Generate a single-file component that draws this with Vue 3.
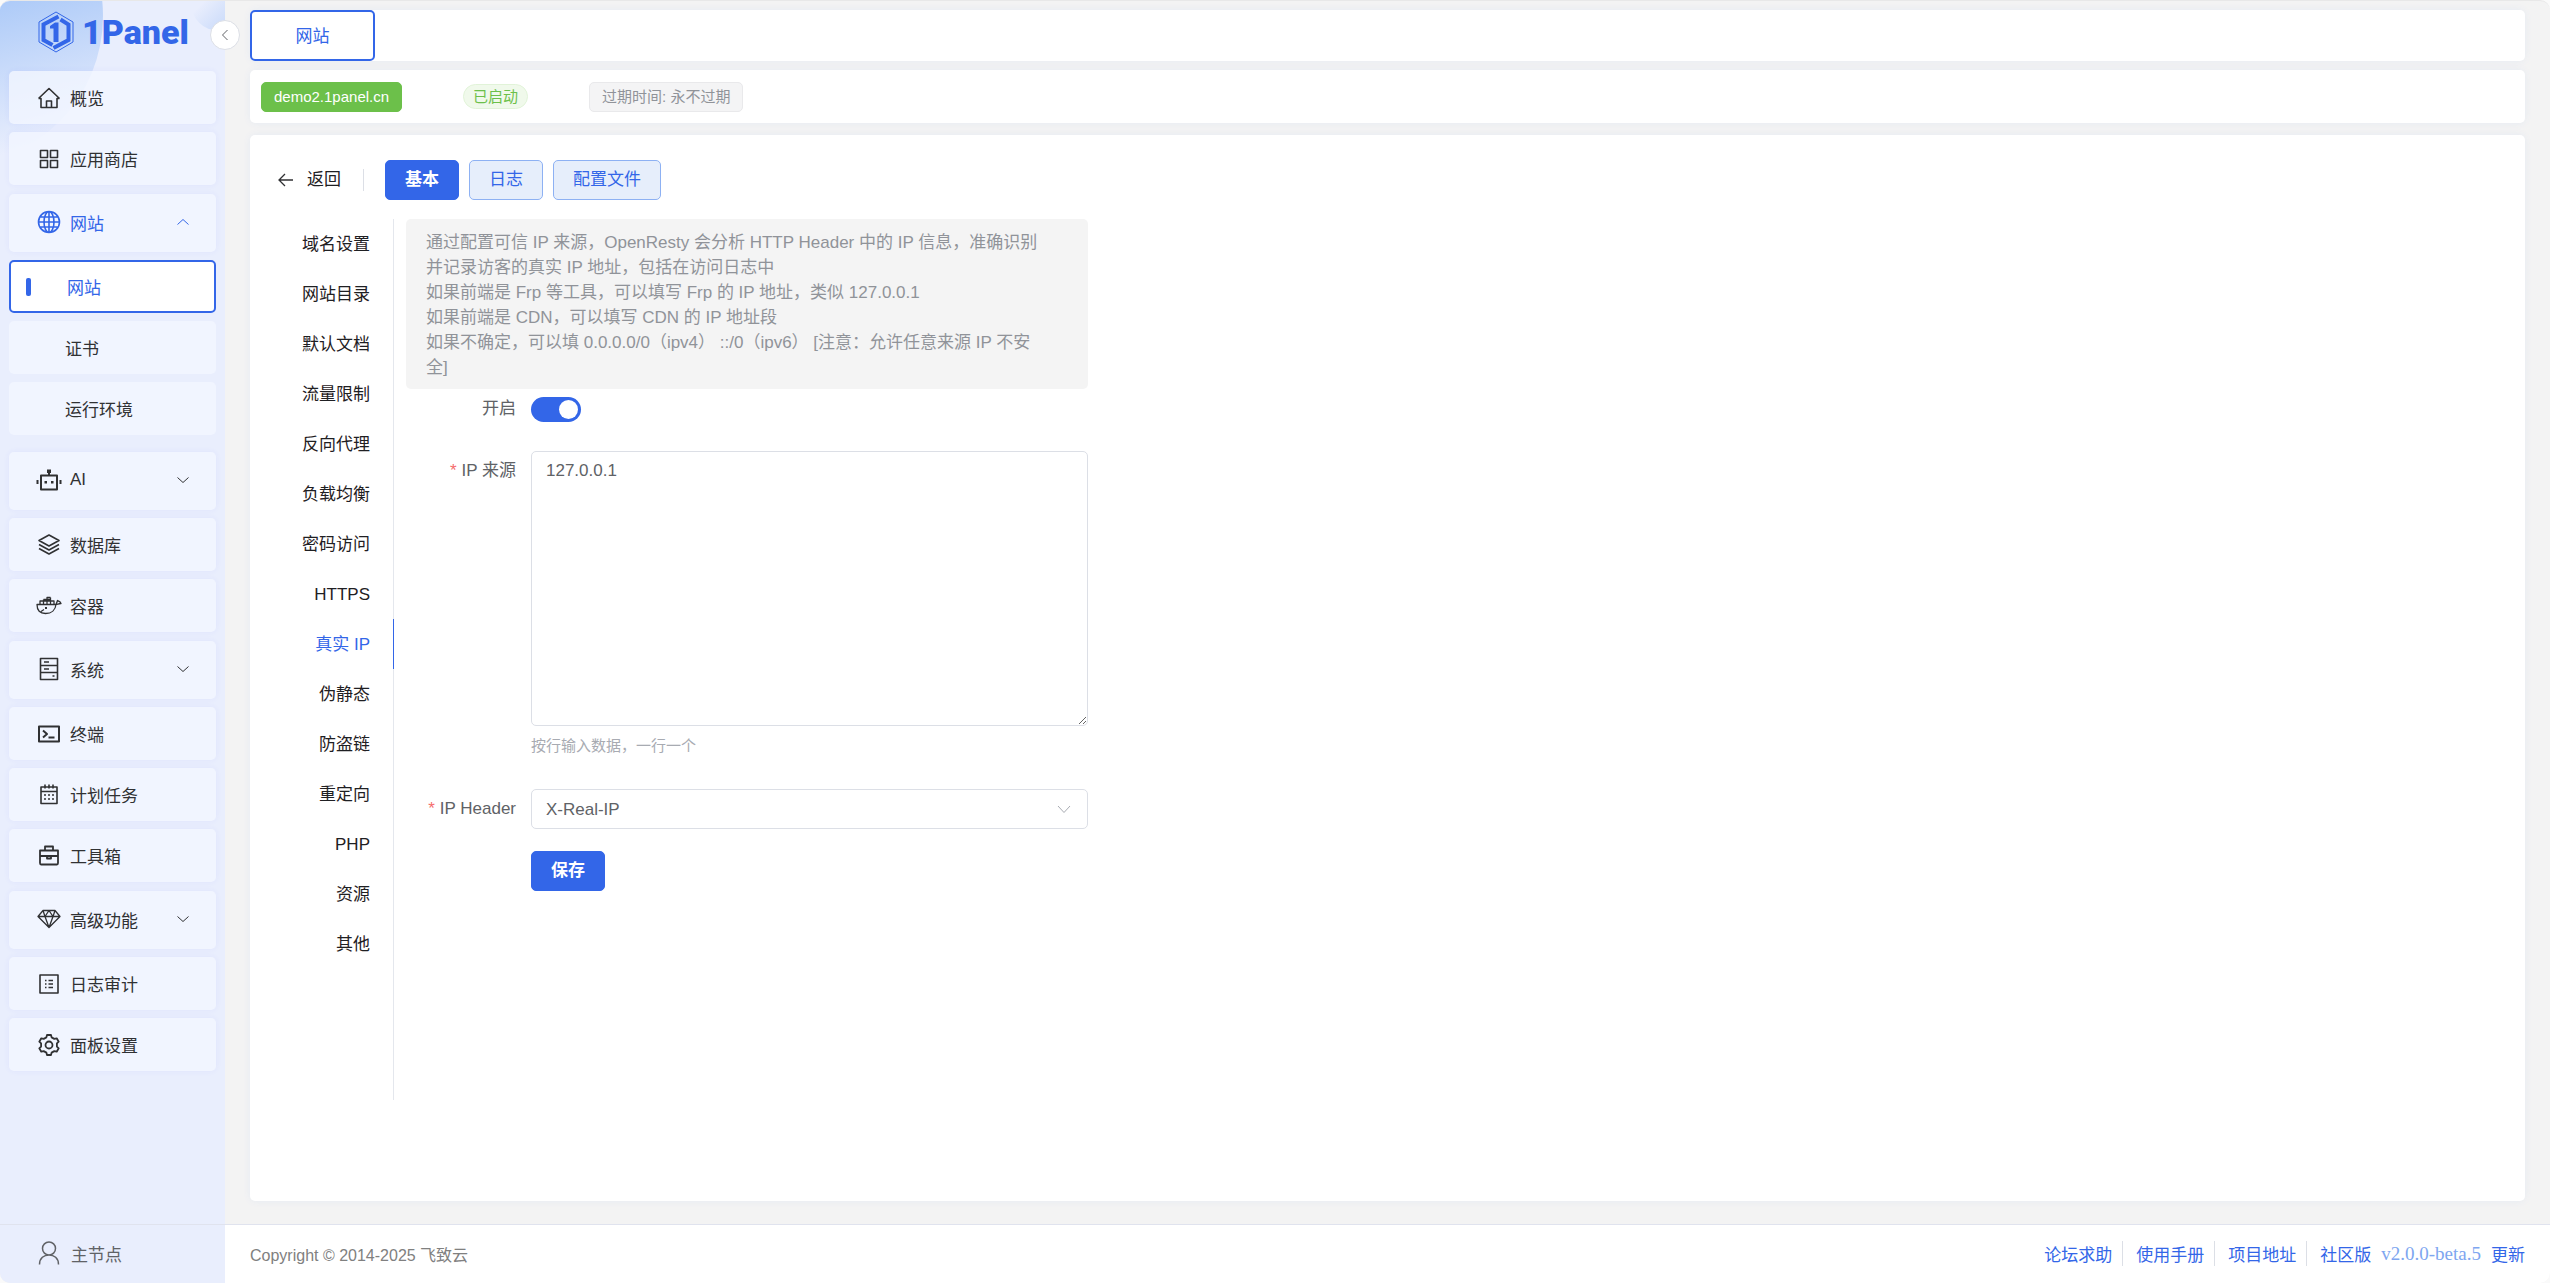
<script setup>
import { ref } from 'vue'

const icons = {
  home: { stroke: 'M2.5 12.5L13 2.5L23.5 12.5M2.5 12.5H5V21.5H21V12.5H23.5M10.5 21V15H15.5V21' },
  grid: { stroke: 'M4.5 3.5H11.5V10.5H4.5ZM14.5 3.5H21.5V10.5H14.5ZM4.5 13.5H11.5V20.5H4.5ZM14.5 13.5H21.5V20.5H14.5Z' },
  globe: {
    stroke:
      'M2.5 12A10.5 10.5 0 1 0 23.5 12A10.5 10.5 0 1 0 2.5 12ZM8 12A5 10.5 0 1 0 18 12A5 10.5 0 1 0 8 12ZM13 1.5V22.5M2.5 12H23.5M4 7H22M4 17H22'
  },
  robot: {
    stroke: 'M5 7.5H21V21.5H5ZM13 4V7.5',
    fill: 'M11 1.5H15V5H11ZM8.5 13H11V15.5H8.5ZM15 13H17.5V15.5H15ZM0.5 12H2.5V16H0.5ZM23.5 12H25.5V16H23.5Z',
    width: 2
  },
  layers: { stroke: 'M13 2L23 7.5L13 13L3 7.5ZM3 11.5L13 17L23 11.5M3 15.5L13 21L23 15.5' },
  docker: {
    stroke:
      'M1 10.5H20C21.5 10.5 22.5 9.5 25 9.5C24 7 22.5 7.5 21.5 6.5C21 8 20.5 9.5 20 10.5C19.5 16 15.5 19.5 9.5 19.5C4 19.5 1 16.5 1 10.5ZM4 10.5V7H18V10.5M7.5 10.5V5.5M11 10.5V5.5M14.5 10.5V3.5M11 5.5V3.5H14.5M7.5 5.5H14.5M5 17.5L8 15.5',
    fill: 'M9 13H11V15H9Z',
    width: 1.3
  },
  server: { stroke: 'M4.5 1.5H21.5V22.5H4.5ZM4.5 8.5H21.5M4.5 15.5H21.5M8 5H13M8 12H13M16.5 19H18.5' },
  terminal: { stroke: 'M3 4.5H23V19.5H3ZM7 8.5L11 12L7 15.5M12.5 15.5H18.5', width: 2 },
  calendar: {
    stroke: 'M5 4H21V20.5H5ZM5 8.5H21M9 1.5V5.5M13 1.5V5.5M17 1.5V5.5M8 12H10M12 12H14M16 12H18M8 16H10M12 16H14M16 16H18'
  },
  toolbox: { stroke: 'M4 6.5H22V19C22 20 21.5 20.5 21 20.5H5C4.500 20.5 4 20 4 19ZM9 6.5V2.5H17V6.5M4 12H22M11 12V14.5H15V12', width: 1.8 },
  diamond: { stroke: 'M7 3.5H19L24 9.5L13 20.5L2 9.5ZM2 9.5H24M9 9.5L13 20.5L17 9.5M9 9.5L13 3.5L17 9.5M7 3.5L9 9.5M19 3.5L17 9.5', width: 1.3 },
  list: { stroke: 'M4 3H22V21H4ZM12.5 8.5H17M12.5 12H17M12.5 15.5H17M9 8.5H10.5M9 12H10.5M9 15.5H10.5' },
  gear: {
    stroke:
      'M10.4 4.4L11 2H15L15.6 4.4L18.3 5.9L20.7 5.3L22.7 8.7L20.9 10.4V13.6L22.7 15.3L20.7 18.7L18.3 18.1L15.6 19.6L15 22H11L10.4 19.6L7.7 18.1L5.3 18.7L3.3 15.3L5.1 13.6V10.4L3.3 8.7L5.3 5.3L7.7 5.9ZM9.500 12A3.5 3.5 0 1 0 16.5 12A3.5 3.5 0 1 0 9.5 12Z',
    width: 1.8
  }
}

const menu = [
  { label: '概览', icon: 'home' },
  { label: '应用商店', icon: 'grid' },
  {
    label: '网站',
    icon: 'globe',
    group: true,
    open: true,
    children: [{ label: '网站', current: true }, { label: '证书' }, { label: '运行环境' }]
  },
  { label: 'AI', icon: 'robot', group: true },
  { label: '数据库', icon: 'layers' },
  { label: '容器', icon: 'docker' },
  { label: '系统', icon: 'server', group: true },
  { label: '终端', icon: 'terminal' },
  { label: '计划任务', icon: 'calendar' },
  { label: '工具箱', icon: 'toolbox' },
  { label: '高级功能', icon: 'diamond', group: true },
  { label: '日志审计', icon: 'list' },
  { label: '面板设置', icon: 'gear' }
]

const sections = [
  '域名设置', '网站目录', '默认文档', '流量限制', '反向代理', '负载均衡', '密码访问', 'HTTPS',
  '真实 IP', '伪静态', '防盗链', '重定向', 'PHP', '资源', '其他'
]
const activeSection = ref('真实 IP')

const notes = [
  '通过配置可信 IP 来源，OpenResty 会分析 HTTP Header 中的 IP 信息，准确识别并记录访客的真实 IP 地址，包括在访问日志中',
  '如果前端是 Frp 等工具，可以填写 Frp 的 IP 地址，类似 127.0.0.1',
  '如果前端是 CDN，可以填写 CDN 的 IP 地址段',
  '如果不确定，可以填 0.0.0.0/0（ipv4） ::/0（ipv6） [注意：允许任意来源 IP 不安全]'
]

const enabled = ref(true)
const ipFrom = ref('127.0.0.1')
const ipHeader = ref('X-Real-IP')
</script>

<template>
  <div class="shell">
    <aside class="sidebar">
      <div class="decor" aria-hidden="true"></div>
      <a class="brand" href="#">
        <svg width="36" height="42" viewBox="0 0 36 42" aria-hidden="true">
          <path d="M18 1L35 11V31L18 41L1 31V11Z" fill="none" stroke="#3366e8" stroke-width="1" />
          <path
            d="M20.500 5.500L5.500 13.500V29L14.500 34M22.500 8.500L30.500 13.500V29L15.500 37"
            fill="none"
            stroke="#3366e8"
            stroke-width="4"
          />
          <path d="M12 15L17 11.500H20.500V31H15.500V17.500H12Z" fill="#3366e8" />
        </svg>
        <span>1Panel</span>
      </a>
      <button class="collapse" type="button" aria-label="收起">
        <svg width="14" height="14" viewBox="0 0 14 14"><path d="M9.500 2L4.500 7L9.500 12" /></svg>
      </button>

      <nav class="menu">
        <template v-for="item in menu" :key="item.label">
          <a class="item" :class="{ group: item.group, open: item.open }" href="#">
            <svg class="icon" width="26" height="24" viewBox="0 0 26 24" aria-hidden="true">
              <path :d="icons[item.icon].stroke" fill="none" stroke="currentColor" stroke-linejoin="round" :stroke-width="icons[item.icon].width || 1.6" />
              <path v-if="icons[item.icon].fill" :d="icons[item.icon].fill" fill="currentColor" />
            </svg>
            <span>{{ item.label }}</span>
            <svg v-if="item.group" class="chevron" width="14" height="14" viewBox="0 0 14 14" aria-hidden="true">
              <path :d="item.open ? 'M1.500 9.500L7 4.500L12.500 9.500' : 'M1.500 4.500L7 9.500L12.500 4.500'" />
            </svg>
          </a>
          <div v-if="item.children" class="submenu">
            <a v-for="child in item.children" :key="child.label" class="subitem" :class="{ current: child.current }" href="#">
              {{ child.label }}
            </a>
          </div>
        </template>
      </nav>

      <a class="node" href="#">
        <svg width="22" height="24" viewBox="0 0 22 24" aria-hidden="true">
          <path d="M4.500 7.500A6.500 6.500 0 1 0 17.500 7.500A6.500 6.500 0 1 0 4.500 7.500ZM1.500 23.500C1.500 17 6 14 11 14S20.500 17 20.500 23.500" />
        </svg>
        <span>主节点</span>
      </a>
    </aside>

    <div class="page">
      <main class="content">
        <nav class="tabs card"><a class="tab" href="#">网站</a></nav>

        <div class="status card">
          <span class="tag domain">demo2.1panel.cn</span>
          <span class="pill">已启动</span>
          <span class="tag expire">过期时间: 永不过期</span>
        </div>

        <section class="detail card">
          <header class="bar">
            <button class="back" type="button">
              <svg width="18" height="18" viewBox="0 0 18 18" aria-hidden="true"><path d="M16 9H2M8 3L2 9L8 15" /></svg>
              <span>返回</span>
            </button>
            <button class="btn primary" type="button">基本</button>
            <button class="btn" type="button">日志</button>
            <button class="btn" type="button">配置文件</button>
          </header>

          <div class="body">
            <nav class="sections">
              <a
                v-for="name in sections"
                :key="name"
                href="#"
                :class="{ active: name === activeSection }"
                @click.prevent="activeSection = name"
              >{{ name }}</a>
            </nav>

            <form class="form" @submit.prevent>
              <div class="alert">
                <p v-for="note in notes" :key="note">{{ note }}</p>
              </div>

              <div class="field">
                <label for="enable">开启</label>
                <div class="control switch-row"><input id="enable" v-model="enabled" class="switch" type="checkbox" role="switch" /></div>
              </div>

              <div class="field">
                <label class="required" for="ip-from">IP 来源</label>
                <div class="control">
                  <textarea id="ip-from" v-model="ipFrom" spellcheck="false"></textarea>
                  <p class="hint">按行输入数据，一行一个</p>
                </div>
              </div>

              <div class="field">
                <label class="required" for="ip-header">IP Header</label>
                <div class="control select">
                  <select id="ip-header" v-model="ipHeader">
                    <option>X-Real-IP</option>
                    <option>X-Forwarded-For</option>
                    <option>CF-Connecting-IP</option>
                  </select>
                  <svg width="14" height="14" viewBox="0 0 14 14" aria-hidden="true"><path d="M1 4L7 10.500L13 4" /></svg>
                </div>
              </div>

              <button class="btn primary save" type="submit">保存</button>
            </form>
          </div>
        </section>
      </main>

      <footer class="footer">
        <span>Copyright © 2014-2025 飞致云</span>
        <div class="links">
          <a href="#">论坛求助</a>
          <a href="#">使用手册</a>
          <a href="#">项目地址</a>
          <a href="#">社区版</a>
          <span class="version">v2.0.0-beta.5</span>
          <a href="#">更新</a>
        </div>
      </footer>
    </div>
  </div>
</template>

<style>
body {
  background: #fafafa;
}
</style>

<style scoped>
.shell,
.shell * {
  box-sizing: border-box;
}

.shell {
  display: flex;
  min-height: 100vh;
  border-top: 1px solid #e8e8e8;
  border-radius: 10px;
  overflow: hidden;
  background: #f3f3f3;
  color: #303133;
  font-family: "Liberation Sans", "Noto Sans CJK SC", sans-serif;
  font-size: 17px;
}

a {
  color: inherit;
  text-decoration: none;
}

p {
  margin: 0;
}

button,
select,
textarea {
  font: inherit;
}

/* Sidebar */
.sidebar {
  position: relative;
  display: flex;
  flex: none;
  flex-direction: column;
  width: 225px;
  background: #e9eefd;
}

.decor {
  position: absolute;
  inset: 0;
  overflow: hidden;
}

.decor::before,
.decor::after {
  position: absolute;
  border-radius: 50%;
  content: "";
}

.decor::before {
  top: -135px;
  left: -197px;
  width: 300px;
  height: 300px;
  background: linear-gradient(165deg, #aecbf8 50%, rgba(233, 238, 253, 0) 90%);
}

.decor::after {
  top: -26px;
  left: 191px;
  width: 56px;
  height: 56px;
  background: linear-gradient(135deg, #e9eefd 35%, #b9d0f8);
}

.brand {
  position: relative;
  display: flex;
  align-items: center;
  gap: 8px;
  height: 62px;
  margin-bottom: 8px;
  padding: 0 0 0 38px;
  color: #3366e8;
  font-family: Roboto, "Liberation Sans", sans-serif;
  font-size: 34px;
  font-weight: 900;
}

.collapse {
  position: absolute;
  top: 19px;
  right: -15px;
  z-index: 1;
  display: flex;
  align-items: center;
  justify-content: center;
  width: 30px;
  height: 30px;
  padding: 0;
  border: 1px solid #dcdfe6;
  border-radius: 50%;
  background: #fff;
}

.collapse path,
.chevron path,
.node path,
.back path,
.select path {
  fill: none;
  stroke: #606266;
  stroke-width: 1;
}

.menu {
  position: relative;
  display: flex;
  flex: 1;
  flex-direction: column;
  gap: 8px;
  padding: 0 9px;
}

.item,
.subitem {
  display: flex;
  align-items: center;
  height: 53px;
  border-radius: 5px;
  background: rgba(242, 246, 255, 0.8);
}

.item {
  gap: 8px;
  padding: 0 26px 0 27px;
  box-shadow: 0 0 6px rgba(60, 60, 255, 0.06);
}

.item.group {
  height: 58px;
  margin-top: 1px;
  padding-bottom: 2px;
}

.item.open {
  color: #3366e8;
}

.chevron path {
  stroke: #303133;
}

.item.open .chevron path {
  stroke: #3366e8;
}

.chevron {
  margin-left: auto;
}

.submenu {
  display: flex;
  flex-direction: column;
  gap: 8px;
  margin-bottom: 8px;
}

.subitem {
  padding-left: 56px;
}

.subitem.current {
  gap: 36px;
  padding-left: 15px;
  border: 2px solid #3366e8;
  background: #fff;
  color: #3366e8;
}

.subitem.current::before {
  width: 5px;
  height: 18px;
  border-radius: 2px;
  background: #3366e8;
  content: "";
}

.node {
  position: relative;
  display: flex;
  align-items: center;
  gap: 11px;
  height: 59px;
  padding: 0 0 2px 38px;
  border-top: 1px solid #e0e3ee;
  color: #606266;
}

.node path {
  stroke-width: 1.5;
}

/* Page */
.page {
  display: flex;
  flex: 1;
  flex-direction: column;
  min-width: 0;
}

.content {
  display: flex;
  flex: 1;
  flex-direction: column;
  padding: 9px 25px 23px;
}

.card {
  border-radius: 5px;
  background: #fff;
  box-shadow: 0 0 8px rgba(0, 94, 235, 0.06);
}

.tabs {
  display: flex;
  margin-bottom: 9px;
}

.tab {
  display: flex;
  align-items: center;
  justify-content: center;
  width: 125px;
  height: 51px;
  padding-bottom: 2px;
  border: 2px solid #3366e8;
  border-radius: 5px;
  color: #3366e8;
}

.status {
  display: flex;
  align-items: center;
  gap: 61px;
  height: 53px;
  margin-bottom: 12px;
  padding: 0 11px;
  font-size: 15px;
}

.tag {
  height: 30px;
  padding: 0 12px;
  border: 1px solid;
  border-radius: 5px;
  line-height: 28px;
}

.domain {
  border-color: #6cc04a;
  background: #6cc04a;
  color: #fff;
}

.pill {
  height: 25px;
  padding: 0 9px;
  border: 1px solid #e1f3d8;
  border-radius: 13px;
  background: #f0f9eb;
  color: #6cc04a;
  line-height: 23px;
}

.expire {
  border-color: #e9e9eb;
  background: #f4f4f5;
  color: #909399;
}

.detail {
  display: flex;
  flex: 1;
  flex-direction: column;
  padding: 25px 27px 101px;
}

.bar {
  display: flex;
  align-items: center;
  gap: 10px;
  margin-bottom: 19px;
}

.back {
  display: flex;
  align-items: center;
  gap: 12px;
  height: 22px;
  margin-right: 11px;
  padding: 0 22px 0 0;
  border: 0;
  border-right: 1px solid #dcdfe6;
  background: none;
  color: #1f2023;
  line-height: 20px;
}

.back path {
  stroke: #303133;
  stroke-width: 1.3;
}

.btn {
  height: 40px;
  padding: 0 19px;
  border: 1px solid #8db1f3;
  border-radius: 5px;
  background: #e6eefb;
  color: #3366e8;
  line-height: 38px;
}

.btn.primary {
  border-color: #3366e8;
  background: #3366e8;
  color: #fff;
  font-weight: 700;
}

.body {
  display: flex;
  flex: 1;
  gap: 12px;
}

.sections {
  width: 117px;
  border-right: 1px solid #e4e7ed;
  text-align: right;
}

.sections a {
  display: block;
  height: 50px;
  margin-right: -1px;
  padding: 1px 23px 0 0;
  border-right: 1px solid transparent;
  color: #1f2023;
  line-height: 50px;
}

.sections .active {
  border-color: #3366e8;
  color: #3366e8;
}

/* Form */
.form {
  width: 682px;
  color: #606266;
}

.alert {
  padding: 11px 40px 9px 20px;
  border-radius: 5px;
  background: #f4f4f4;
  color: #909399;
  line-height: 25px;
}

.field {
  display: flex;
  margin-bottom: 22px;
}

.field label {
  width: 125px;
  padding-right: 15px;
  line-height: 40px;
  text-align: right;
}

.required::before {
  margin-right: 5px;
  color: #f56c6c;
  content: "*";
}

.control {
  flex: 1;
}

.switch-row {
  display: flex;
  align-items: center;
}

.switch {
  width: 50px;
  height: 25px;
  margin: 0;
  padding: 3px;
  border-radius: 13px;
  background: #dcdfe6;
  appearance: none;
}

.switch::before {
  display: block;
  width: 19px;
  height: 19px;
  border-radius: 50%;
  background: #fff;
  content: "";
}

.switch:checked {
  background: #3366e8;
}

.switch:checked::before {
  margin-left: auto;
}

textarea,
select {
  display: block;
  width: 100%;
  padding: 6px 14px;
  border: 1px solid #dcdfe6;
  border-radius: 5px;
  outline: none;
  background: #fff;
  color: #606266;
}

textarea {
  height: 275px;
  line-height: 26px;
  resize: vertical;
}

.hint {
  height: 41px;
  color: #a8abb2;
  font-size: 15px;
  line-height: 40px;
}

.select {
  position: relative;
}

select {
  height: 40px;
  appearance: none;
}

.select svg {
  position: absolute;
  top: 13px;
  right: 17px;
  pointer-events: none;
}

.select path {
  stroke: #a8abb2;
}

.save {
  margin-left: 125px;
}

/* Footer */
.footer {
  display: flex;
  align-items: center;
  justify-content: space-between;
  height: 59px;
  padding: 0 25px 1px;
  border-top: 1px solid #e0e3ee;
  background: #fff;
  color: #808080;
  font-size: 16px;
}

.links {
  display: flex;
  align-items: center;
  gap: 10px;
  color: #3366e8;
  font-size: 17px;
}

.links a + a {
  padding-left: 13px;
  border-left: 1px solid #dcdfe6;
}

.version {
  color: #7ea6f0;
  font-family: "Liberation Serif", serif;
  font-size: 19px;
}
</style>
